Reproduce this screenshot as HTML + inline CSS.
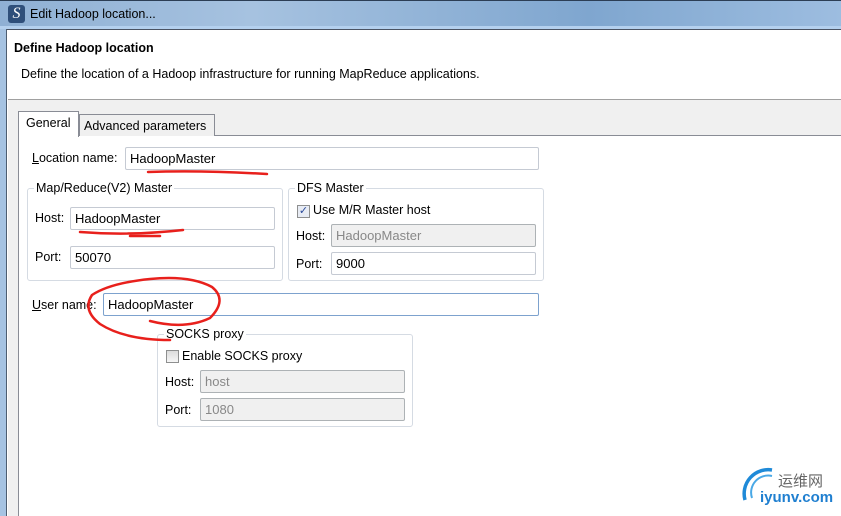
<!DOCTYPE html>
<html><head><meta charset="utf-8"><style>
*{margin:0;padding:0;box-sizing:border-box}
body{width:841px;height:516px;overflow:hidden;position:relative;background:#fff;font-family:"Liberation Sans",sans-serif;font-size:12px;color:#000}
.a{position:absolute;white-space:nowrap}
.in{position:absolute;border:1px solid #c5cad3;background:#fff;border-radius:2px;padding-left:4px;line-height:21px;font-size:13px}
.dis{background:#f0f0f0;border-color:#adb2b5;color:#888}
.grp{position:absolute;border:1px solid #d5dbe3;border-radius:3px}
.lg{position:absolute;background:#fff;padding:0 2px;font-size:12.5px}
.cb{position:absolute;width:13px;height:13px;border:1px solid #8e8f8f;background:linear-gradient(#dcdcdc,#f6f6f6)}
</style></head><body>
<div class="a" style="left:0;top:0;width:841px;height:29px;background:linear-gradient(90deg,#8fb0d4,#a6c2e0 30%,#7fa6cf 70%,#9dbde0);border-top:1px solid #2c3e55"></div>
<div class="a" style="left:0;top:26px;width:841px;height:3px;background:#b4d0ee"></div>
<div class="a" style="left:8px;top:5px;width:17px;height:18px;background:#2f4f7a;border-radius:3px;color:#fff;font-style:italic;font-family:'Liberation Serif',serif;font-size:16px;text-align:center;line-height:17px">S</div>
<div class="a" style="left:30px;top:7px;font-size:12.5px">Edit Hadoop location...</div>
<div class="a" style="left:0;top:29px;width:7px;height:487px;background:#a6c3e2;border-right:1px solid #4d5d70"></div>
<div class="a" style="left:7px;top:29px;width:834px;height:1px;background:#4a5363"></div>
<div class="a" style="left:8px;top:99px;width:833px;height:417px;background:#f0f0f0;border-top:1px solid #a0a0a0"></div>
<div class="a" style="left:14px;top:41px;font-weight:bold;font-size:12.5px">Define Hadoop location</div>
<div class="a" style="left:21px;top:67px;font-size:12.5px">Define the location of a Hadoop infrastructure for running MapReduce applications.</div>
<div class="a" style="left:18px;top:135px;width:823px;height:381px;background:#fff;border-left:1px solid #898c95;border-top:1px solid #898c95"></div>
<div class="a" style="left:79px;top:114px;width:136px;height:22px;background:#f0f0f0;border:1px solid #898c95;border-bottom:none;padding:4px 0 0 4px;font-size:12.5px">Advanced parameters</div>
<div class="a" style="left:18px;top:111px;width:61px;height:26px;background:#fff;border:1px solid #898c95;border-bottom:none;padding:4px 0 0 7px;font-size:12.5px">General</div>
<div class="a" style="left:32px;top:151px;font-size:12.5px"><u>L</u>ocation name:</div>
<div class="in" style="left:125px;top:147px;width:414px;height:23px">HadoopMaster</div>
<div class="grp" style="left:27px;top:188px;width:256px;height:93px"></div>
<div class="lg" style="left:34px;top:181px">Map/Reduce(V2) Master</div>
<div class="a" style="left:35px;top:211px;font-size:12.5px">Host:</div>
<div class="in" style="left:70px;top:207px;width:205px;height:23px">HadoopMaster</div>
<div class="a" style="left:35px;top:250px;font-size:12.5px">Port:</div>
<div class="in" style="left:70px;top:246px;width:205px;height:23px">50070</div>
<div class="grp" style="left:288px;top:188px;width:256px;height:93px"></div>
<div class="lg" style="left:295px;top:181px">DFS Master</div>
<div class="cb" style="left:297px;top:205px;background:#e8ecf4;color:#2a4a9a;font-size:11px;line-height:11px;text-align:center">✓</div>
<div class="a" style="left:313px;top:203px;font-size:12.5px">Use M/R Master host</div>
<div class="a" style="left:296px;top:229px;font-size:12.5px">Host:</div>
<div class="in dis" style="left:331px;top:224px;width:205px;height:23px">HadoopMaster</div>
<div class="a" style="left:296px;top:257px;font-size:12.5px">Port:</div>
<div class="in" style="left:331px;top:252px;width:205px;height:23px">9000</div>
<div class="a" style="left:32px;top:298px;font-size:12.5px"><u>U</u>ser name:</div>
<div class="in" style="left:103px;top:293px;width:436px;height:23px;border-color:#7da2ce">HadoopMaster</div>
<div class="grp" style="left:157px;top:334px;width:256px;height:93px"></div>
<div class="lg" style="left:164px;top:327px">SOCKS proxy</div>
<div class="cb" style="left:166px;top:350px"></div>
<div class="a" style="left:182px;top:349px;font-size:12.5px">Enable SOCKS proxy</div>
<div class="a" style="left:165px;top:375px;font-size:12.5px">Host:</div>
<div class="in dis" style="left:200px;top:370px;width:205px;height:23px">host</div>
<div class="a" style="left:165px;top:403px;font-size:12.5px">Port:</div>
<div class="in dis" style="left:200px;top:398px;width:205px;height:23px">1080</div>
<svg class="a" style="left:0;top:0" width="841" height="516">
<g fill="none" stroke="#e8201c" stroke-width="2.5" stroke-linecap="round">
<path d="M148 172 Q200 170 267 174"/>
<path d="M80 232 Q130 236 183 230 M130 236 L160 236"/>
<path d="M150 321 Q185 330 210 318 Q228 300 212 287 Q190 275 150 279 Q110 283 92 295 Q82 310 100 324 Q125 340 170 340"/>
</g>
<path d="M745 500 A24 24 0 0 1 772 470" fill="none" stroke="#1f8ad8" stroke-width="3.5"/>
<path d="M752 498 A17 17 0 0 1 772 476" fill="none" stroke="#49a8e6" stroke-width="2"/>
</svg>
<div class="a" style="left:778px;top:470px;font-size:15px;color:#666;font-family:'Liberation Sans','Noto Sans CJK SC',sans-serif">运维网</div>
<div class="a" style="left:760px;top:489px;font-size:15px;color:#1f7fd0;font-weight:bold">iyunv.com</div>
</body></html>
